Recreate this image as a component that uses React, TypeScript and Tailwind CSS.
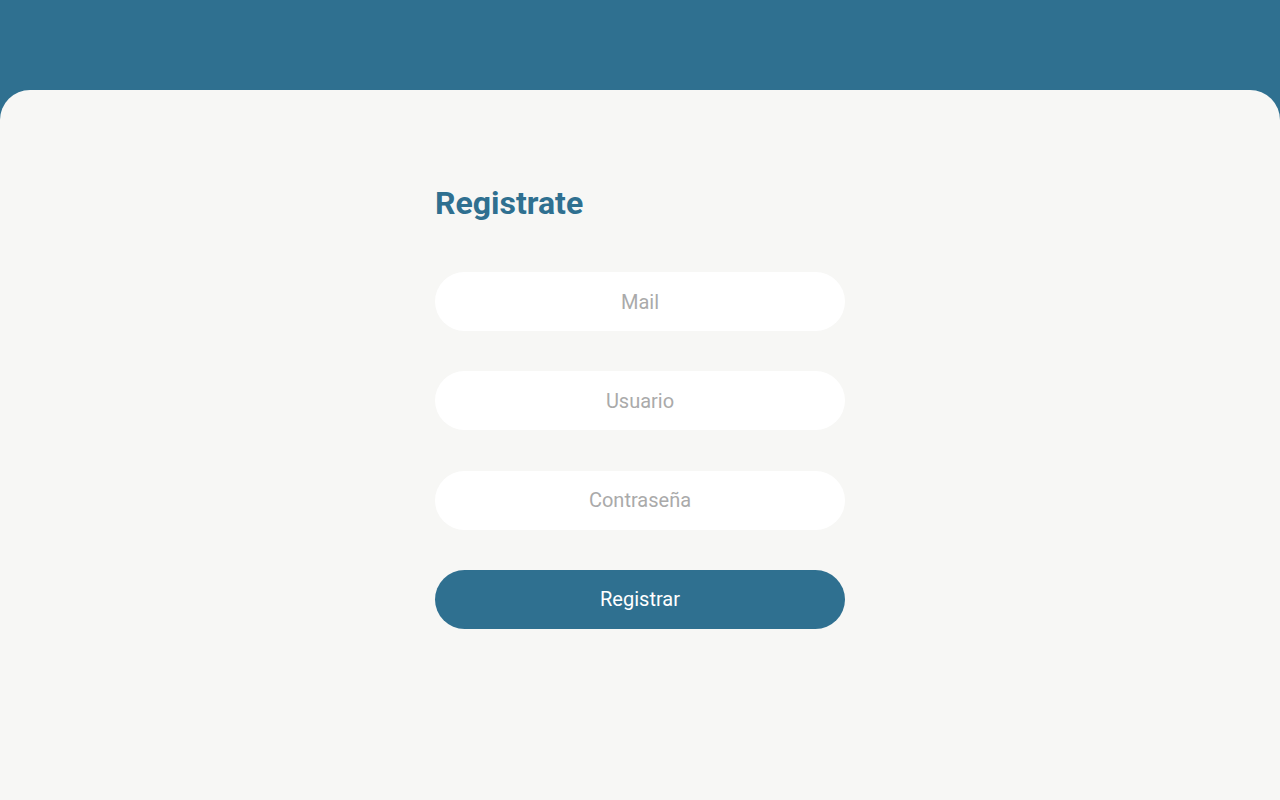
export default function App() {
  return (
    <div className="min-h-screen bg-[#2f7090] pt-[90px] font-['Roboto',sans-serif]">
      <div className="min-h-[710px] rounded-t-[30px] bg-[#f7f7f5] flex justify-center pt-[93px]">
        <form className="w-[410px] flex flex-col" onSubmit={(e) => e.preventDefault()}>
          <h1 className="text-[32px] leading-[40px] font-bold text-[#2f7090] mb-[49px]">Registrate</h1>
          <div className="flex flex-col gap-[40.33px]">
            <input
              type="email"
              placeholder="Mail"
              className="h-[59px] rounded-full bg-white text-center text-[20px] text-gray-700 placeholder:text-[#aaaaaa] outline-none"
            />
            <input
              type="text"
              placeholder="Usuario"
              className="h-[59px] rounded-full bg-white text-center text-[20px] text-gray-700 placeholder:text-[#aaaaaa] outline-none"
            />
            <input
              type="password"
              placeholder="Contraseña"
              className="h-[59px] rounded-full bg-white text-center text-[20px] text-gray-700 placeholder:text-[#aaaaaa] outline-none"
            />
            <button
              type="submit"
              className="h-[59px] rounded-full bg-[#2f7090] text-white text-[20px]"
            >
              Registrar
            </button>
          </div>
        </form>
      </div>
    </div>
  );
}
